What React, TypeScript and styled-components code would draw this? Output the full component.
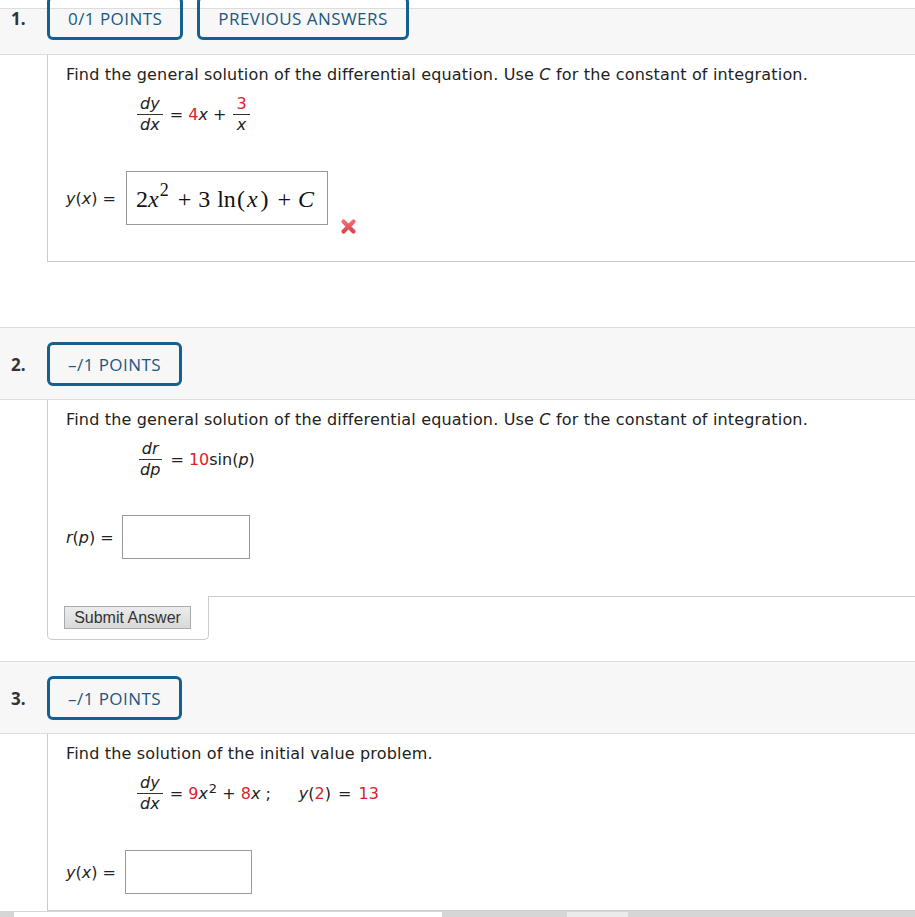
import React from 'react';
import styled, { createGlobalStyle } from 'styled-components';

const GlobalStyle = createGlobalStyle`
  html, body {
    margin: 0;
    padding: 0;
    background: #ffffff;
    overflow: hidden;
  }
  body {
    font-family: "DejaVu Sans", Verdana, sans-serif;
    color: #222222;
  }
`;

const Page = styled.div`
  width: 915px;
  height: 917px;
  overflow: hidden;
`;

const Question = styled.section<{ $gap: number }>`
  margin-bottom: ${(p) => p.$gap}px;
`;

const Header = styled.div<{ $first?: boolean }>`
  background: #f7f7f7;
  border-top: 1px solid #dddddd;
  border-bottom: 1px solid #dddddd;
  padding: ${(p) => (p.$first ? '0 0 13px' : '14px 0 13px')};
  margin-top: ${(p) => (p.$first ? '8px' : '0')};
  height: ${(p) => (p.$first ? '32px' : '44px')};
  box-sizing: content-box;
`;

const HeaderRow = styled.div<{ $first?: boolean }>`
  display: flex;
  align-items: center;
  height: 44px;
  margin-top: ${(p) => (p.$first ? '-13px' : '0')};
`;

const Number = styled.div`
  width: 47px;
  padding-left: 11px;
  box-sizing: border-box;
  font-family: "Open Sans", "Noto Sans", sans-serif;
  font-weight: 700;
  font-size: 17px;
  color: #333333;
`;

const Badges = styled.div`
  display: flex;
  gap: 14px;
`;

const Badge = styled.div`
  height: 44px;
  box-sizing: border-box;
  border: 3px solid #15608e;
  border-radius: 6px;
  padding: 0 18px;
  display: flex;
  align-items: center;
  font-family: "Open Sans", "Noto Sans", sans-serif;
  font-weight: 500;
  font-size: 17px;
  letter-spacing: 0.45px;
  color: #1b5780;
  background: transparent;
  white-space: nowrap;
`;

const Body = styled.div<{ $pad: number }>`
  margin-left: 47px;
  border-left: 1px solid #cccccc;
  border-bottom: 1px solid #cccccc;
  padding: 10px 0 ${(p) => p.$pad}px 18px;
`;

const Prompt = styled.div`
  font-size: 16px;
  line-height: 20px;
  letter-spacing: 0.17px;
  color: #222222;
`;

const Equation = styled.div`
  margin: 9px 0 0 71px;
  display: flex;
  align-items: center;
  font-size: 16px;
`;

const Rhs = styled.span`
  white-space: pre;
  line-height: 20px;
`;

const Fraction = styled.span`
  display: inline-flex;
  flex-direction: column;
  align-items: center;
  margin: 0 2px 0 0;
`;

const InlineFraction = styled(Fraction)`
  vertical-align: middle;
  margin: 0 0 0 2px;
`;

const Over = styled.span`
  border-bottom: 1px solid #333333;
  padding: 0 3px;
  line-height: 20px;
`;

const Under = styled.span`
  padding: 0 3px;
  line-height: 20px;
`;

const V = styled.i`
  font-style: italic;
`;

const Red = styled.span`
  color: #d9232b;
`;

const Sup = styled.sup`
  font-size: 13px;
  line-height: 0;
  vertical-align: 6px;
  margin-left: 1px;
`;

const Spacer = styled.span<{ $w: number }>`
  display: inline-block;
  width: ${(p) => p.$w}px;
`;

const AnswerRow = styled.div<{ $gap: number }>`
  margin-top: ${(p) => p.$gap}px;
  display: flex;
  align-items: center;
`;

const Label = styled.span<{ $w: number }>`
  font-size: 16px;
  white-space: pre;
  width: ${(p) => p.$w}px;
  flex-shrink: 0;
`;

const AnswerBox = styled.div<{ $w: number; $h: number }>`
  width: ${(p) => p.$w}px;
  height: ${(p) => p.$h}px;
  box-sizing: border-box;
  border: 1px solid #999999;
  background: #ffffff;
  display: flex;
  align-items: center;
  padding: 2px 0 0 9px;
`;

const Tex = styled.span`
  font-family: "Liberation Serif", "DejaVu Serif", serif;
  font-size: 24px;
  color: #111111;
  white-space: pre;
  display: inline-flex;
  align-items: baseline;
`;

const TexVar = styled.i`
  font-style: italic;
`;

const TexSup = styled.span`
  font-size: 18px;
  position: relative;
  top: -11px;
  margin-left: 1px;
`;

const TexOp = styled.span`
  margin: 0 7px 0 9px;
`;

const TexFn = styled.span`
  margin: 0 1px 0 7px;
`;

const TexParen = styled.span<{ $l?: number; $r?: number }>`
  margin: 0 ${(p) => p.$r ?? 0}px 0 ${(p) => p.$l ?? 0}px;
`;

const WrongMark = styled.svg`
  align-self: flex-start;
  margin: 47px 0 -10px 12px;
`;

const SubmitBox = styled.div`
  margin-left: 47px;
  margin-top: -1px;
  width: 162px;
  box-sizing: border-box;
  background: #ffffff;
  border: 1px solid #cccccc;
  border-top: none;
  border-radius: 0 0 5px 5px;
  padding: 10px 17px 10px 16px;
`;

const SubmitButton = styled.button`
  width: 127px;
  height: 23px;
  border: 1px solid #aaaaaa;
  border-radius: 0;
  background: linear-gradient(#ececec, #d9d9d9);
  font-family: "Liberation Sans", Arial, sans-serif;
  font-size: 16px;
  color: #333333;
  padding: 0;
  line-height: 21px;
`;

const ScrollStrip = styled.div`
  position: fixed;
  left: 0;
  right: 0;
  bottom: 0;
  height: 5px;
  background: #d6d6d6;
  display: flex;
  padding-top: 1px;
`;

const StripPart = styled.div<{ $from: number; $w: number; $c: string }>`
  margin-left: ${(p) => p.$from}px;
  width: ${(p) => p.$w}px;
  background: ${(p) => p.$c};
`;

const Cross = () => (
  <WrongMark width="17" height="17" viewBox="0 0 17 17">
    <defs>
      <linearGradient id="xg" x1="0" y1="0" x2="0" y2="1">
        <stop offset="0" stopColor="#f26b74" />
        <stop offset="1" stopColor="#e2434e" />
      </linearGradient>
    </defs>
    <path
      d="M3.5 3.5 L13.5 13.5 M13.5 3.5 L3.5 13.5"
      stroke="url(#xg)"
      strokeWidth="4.2"
      strokeLinecap="round"
    />
  </WrongMark>
);

const Frac = ({ top, bottom }: { top: React.ReactNode; bottom: React.ReactNode }) => (
  <Fraction>
    <Over>{top}</Over>
    <Under>{bottom}</Under>
  </Fraction>
);

const App = () => {
  return (
    <>
      <GlobalStyle />
      <Page>
        <Question $gap={65}>
          <Header $first>
            <HeaderRow $first>
              <Number>1.</Number>
              <Badges>
                <Badge>0/1 POINTS</Badge>
                <Badge>PREVIOUS ANSWERS</Badge>
              </Badges>
            </HeaderRow>
          </Header>
          <Body $pad={36}>
            <Prompt>
              Find the general solution of the differential equation. Use <V>C</V> for the
              constant of integration.
            </Prompt>
            <Equation>
              <Frac top={<V>dy</V>} bottom={<V>dx</V>} />
              <Rhs>
                {' = '}
                <Red>4</Red>
                <V>x</V>
                {' + '}
              </Rhs>
              <InlineFraction>
                <Over>
                  <Red>3</Red>
                </Over>
                <Under>
                  <V>x</V>
                </Under>
              </InlineFraction>
            </Equation>
            <AnswerRow $gap={36}>
              <Label $w={60}>
                <V>y</V>(<V>x</V>) =
              </Label>
              <AnswerBox $w={202} $h={54}>
                <Tex>
                  2<TexVar>x</TexVar>
                  <TexSup>2</TexSup>
                  <TexOp>+</TexOp>3<TexFn>ln</TexFn>
                  <TexParen $r={2}>(</TexParen>
                  <TexVar>x</TexVar>
                  <TexParen $l={3}>)</TexParen>
                  <TexOp>+</TexOp>
                  <TexVar>C</TexVar>
                </Tex>
              </AnswerBox>
              <Cross />
            </AnswerRow>
          </Body>
        </Question>

        <Question $gap={21}>
          <Header>
            <HeaderRow>
              <Number>2.</Number>
              <Badges>
                <Badge>–/1 POINTS</Badge>
              </Badges>
            </HeaderRow>
          </Header>
          <Body $pad={37}>
            <Prompt>
              Find the general solution of the differential equation. Use <V>C</V> for the
              constant of integration.
            </Prompt>
            <Equation>
              <Frac top={<V>dr</V>} bottom={<V>dp</V>} />
              <Rhs>
                {' = '}
                <Red>10</Red>sin(<V>p</V>)
              </Rhs>
            </Equation>
            <AnswerRow $gap={35}>
              <Label $w={56}>
                <V>r</V>(<V>p</V>) =
              </Label>
              <AnswerBox $w={128} $h={44} />
            </AnswerRow>
          </Body>
          <SubmitBox>
            <SubmitButton type="button">Submit Answer</SubmitButton>
          </SubmitBox>
        </Question>

        <Question $gap={0}>
          <Header>
            <HeaderRow>
              <Number>3.</Number>
              <Badges>
                <Badge>–/1 POINTS</Badge>
              </Badges>
            </HeaderRow>
          </Header>
          <Body $pad={16}>
            <Prompt>Find the solution of the initial value problem.</Prompt>
            <Equation>
              <Frac top={<V>dy</V>} bottom={<V>dx</V>} />
              <Rhs>
                {' = '}
                <Red>9</Red>
                <V>x</V>
                <Sup>2</Sup>
                {' + '}
                <Red>8</Red>
                <V>x</V>
                {' ;'}
                <Spacer $w={28} />
                <V>y</V>(<Red>2</Red>)<Spacer $w={2} />
                {' = '}
                <Spacer $w={2} />
                <Red>13</Red>
              </Rhs>
            </Equation>
            <AnswerRow $gap={36}>
              <Label $w={59}>
                <V>y</V>(<V>x</V>) =
              </Label>
              <AnswerBox $w={127} $h={44} />
            </AnswerRow>
          </Body>
        </Question>

        <ScrollStrip>
          <StripPart $from={14} $w={428} $c="#ffffff" />
          <StripPart $from={125} $w={61} $c="#ebebeb" />
        </ScrollStrip>
      </Page>
    </>
  );
};

export default App;
